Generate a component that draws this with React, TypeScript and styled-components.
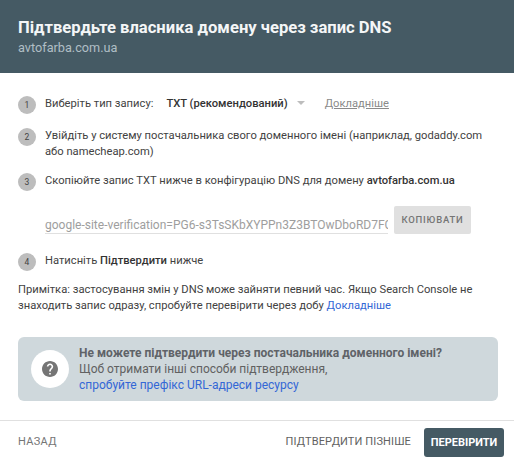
import React from 'react';
import styled, { createGlobalStyle } from 'styled-components';

const GlobalStyle = createGlobalStyle`
    html, body {
        margin: 0;
        padding: 0;
        background: #fff;
    }
    * {
        box-sizing: border-box;
    }
`;

const Dialog = styled.div`
    width: 514px;
    height: 466px;
    display: flex;
    flex-direction: column;
    font-family: Roboto, "Noto Sans", sans-serif;
    font-size: 11.2px;
    line-height: 16px;
    color: #424242;
    overflow: hidden;
`;

const Header = styled.header`
    height: 73px;
    flex-shrink: 0;
    padding: 17px 18px 0;
    background: #455a64;
`;

const Title = styled.div`
    font-size: 16.6px;
    line-height: 22px;
    font-weight: 700;
    color: #f4f6f7;
`;

const Subtitle = styled.div`
    font-size: 12.7px;
    line-height: 17px;
    color: #b0bec5;
`;

const Body = styled.main`
    flex: 1;
    padding: 22px 18px 0;
    display: flex;
    flex-direction: column;
`;

const Step = styled.div<{ $mb: number }>`
    display: flex;
    gap: 9px;
    margin-bottom: ${p => p.$mb}px;
`;

const StepNumber = styled.div`
    width: 18px;
    height: 18px;
    flex-shrink: 0;
    margin-top: 1px;
    border-radius: 50%;
    background: #bdbdbd;
    color: #424242;
    font-size: 8.5px;
    line-height: 19px;
    text-align: center;
`;

const StepText = styled.div`
    flex: 1;
    padding-top: 1px;
`;

const Strong = styled.span`
    font-weight: 500;
    color: #333;
`;

const RecordType = styled.span`
    display: inline-flex;
    align-items: center;
    margin-left: 13px;
    font-weight: 500;
    color: #333;
`;

const Caret = styled.span`
    width: 0;
    height: 0;
    margin: 0 20px 2px 9px;
    border-left: 4px solid transparent;
    border-right: 4px solid transparent;
    border-top: 4px solid #bdbdbd;
`;

const MutedLink = styled.span`
    color: #8a8a8a;
    text-decoration: underline;
`;

const CopyRow = styled.div`
    display: flex;
    align-items: flex-start;
    gap: 6px;
    margin: 0 0 18px 27px;
`;

const RecordField = styled.div`
    width: 343px;
    height: 28px;
    padding-top: 11px;
    overflow: hidden;
    white-space: nowrap;
    font-size: 12px;
    line-height: 16px;
    color: #9e9e9e;
    border-bottom: 1px solid #e0e0e0;
`;

const CopyButton = styled.div`
    width: 77px;
    height: 28px;
    background: #e0e0e0;
    border-radius: 2px;
    color: #757575;
    font-size: 9.5px;
    font-weight: 500;
    letter-spacing: 0.8px;
    line-height: 27px;
    text-align: center;
`;

const Note = styled.p`
    margin: 0 0 23px;
`;

const BlueLink = styled.span`
    color: #3367d6;
`;

const Callout = styled.div`
    width: 480px;
    height: 64px;
    display: flex;
    align-items: center;
    gap: 10px;
    padding: 0 13px;
    background: #cfd8dc;
    border-radius: 6px;
    font-size: 12px;
    color: #616161;
`;

const HelpCircle = styled.div`
    width: 38px;
    height: 38px;
    flex-shrink: 0;
    display: flex;
    align-items: center;
    justify-content: center;
    border-radius: 50%;
    background: #fff;
`;

const CalloutTitle = styled.div`
    font-weight: 700;
    color: #5f6368;
`;

const Footer = styled.footer`
    height: 46px;
    flex-shrink: 0;
    display: flex;
    align-items: center;
    padding: 0 10px 3px 18px;
    border-top: 1px solid #e0e0e0;
    font-size: 11px;
`;

const BackButton = styled.div`
    flex: 1;
    color: #757575;
    letter-spacing: 0.3px;
`;

const LaterButton = styled.div`
    margin-right: 13px;
    color: #616161;
    letter-spacing: 0.12px;
`;

const VerifyButton = styled.div`
    width: 80px;
    height: 29px;
    background: #455a64;
    border-radius: 3px;
    color: #fff;
    font-weight: 700;
    line-height: 29px;
    text-align: center;
`;

const App: React.FC = () => (
    <Dialog>
        <GlobalStyle />
        <Header>
            <Title>Підтвердьте власника домену через запис DNS</Title>
            <Subtitle>avtofarba.com.ua</Subtitle>
        </Header>
        <Body>
            <Step $mb={13}>
                <StepNumber>1</StepNumber>
                <StepText>
                    Виберіть тип запису:
                    <RecordType>TXT (рекомендований)<Caret /></RecordType>
                    <MutedLink>Докладніше</MutedLink>
                </StepText>
            </Step>
            <Step $mb={12}>
                <StepNumber>2</StepNumber>
                <StepText>
                    Увійдіть у систему постачальника свого доменного імені (наприклад, godaddy.com або namecheap.com)
                </StepText>
            </Step>
            <Step $mb={15}>
                <StepNumber>3</StepNumber>
                <StepText>
                    Скопіюйте запис TXT нижче в конфігурацію DNS для домену <Strong>avtofarba.com.ua</Strong>
                </StepText>
            </Step>
            <CopyRow>
                <RecordField>google-site-verification=PG6-s3TsSKbXYPPn3Z3BTOwDboRD7FCx</RecordField>
                <CopyButton>КОПІЮВАТИ</CopyButton>
            </CopyRow>
            <Step $mb={11}>
                <StepNumber>4</StepNumber>
                <StepText>
                    Натисніть <Strong>Підтвердити</Strong> нижче
                </StepText>
            </Step>
            <Note>
                Примітка: застосування змін у DNS може зайняти певний час. Якщо Search Console не знаходить запис одразу, спробуйте перевірити через добу <BlueLink>Докладніше</BlueLink>
            </Note>
            <Callout>
                <HelpCircle>
                    <svg width="16" height="16" viewBox="2 2 20 20" fill="#757575">
                        <path d="M12 2C6.48 2 2 6.48 2 12s4.48 10 10 10 10-4.48 10-10S17.52 2 12 2zm1 17h-2v-2h2v2zm2.07-7.75l-.9.92C13.45 12.9 13 13.5 13 15h-2v-.5c0-1.1.45-2.1 1.17-2.83l1.24-1.26c.37-.36.59-.86.59-1.41 0-1.1-.9-2-2-2s-2 .9-2 2H8c0-2.21 1.79-4 4-4s4 1.79 4 4c0 .88-.36 1.68-.93 2.25z" />
                    </svg>
                </HelpCircle>
                <div>
                    <CalloutTitle>Не можете підтвердити через постачальника доменного імені?</CalloutTitle>
                    <div>Щоб отримати інші способи підтвердження,</div>
                    <BlueLink>спробуйте префікс URL-адреси ресурсу</BlueLink>
                </div>
            </Callout>
        </Body>
        <Footer>
            <BackButton>НАЗАД</BackButton>
            <LaterButton>ПІДТВЕРДИТИ ПІЗНІШЕ</LaterButton>
            <VerifyButton>ПЕРЕВІРИТИ</VerifyButton>
        </Footer>
    </Dialog>
);

export default App;
